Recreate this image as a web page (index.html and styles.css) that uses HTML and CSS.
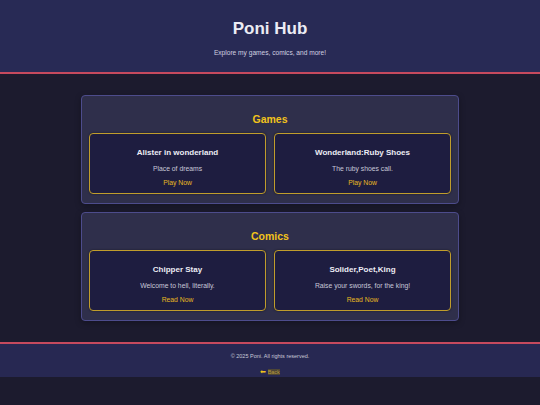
FILE: index.html
```html
<!DOCTYPE html>
<html lang="en">
<head>
  <meta charset="UTF-8">
  <meta name="viewport" content="width=device-width, initial-scale=1.0">
  <title>Poni Hub</title>
  <link rel="stylesheet" href="styles.css">
</head>
<body>
  <header class="site-header">
    <h1>Poni Hub</h1>
    <p>Explore my games, comics, and more!</p>
  </header>

  <main class="hub">
    <section class="shelf">
      <h2>Games</h2>
      <div class="shelf-grid">
        <div class="item">
          <h3>Alister in wonderland</h3>
          <p>Place of dreams</p>
          <a href="#">Play Now</a>
        </div>
        <div class="item">
          <h3>Wonderland:Ruby Shoes</h3>
          <p>The ruby shoes call.</p>
          <a href="#">Play Now</a>
        </div>
      </div>
    </section>

    <section class="shelf">
      <h2>Comics</h2>
      <div class="shelf-grid">
        <div class="item">
          <h3>Chipper Stay</h3>
          <p>Welcome to hell, literally.</p>
          <a href="#">Read Now</a>
        </div>
        <div class="item">
          <h3>Solider,Poet,King</h3>
          <p>Raise your swords, for the king!</p>
          <a href="#">Read Now</a>
        </div>
      </div>
    </section>
  </main>

  <footer class="site-footer">
    <p>&copy; 2025 Poni. All rights reserved.</p>
    <a class="back" href="#"><span class="arrow">⬅</span> <span class="back-text">Back</span></a>
  </footer>
</body>
</html>
```

FILE: styles.css
```css
body {
  margin: 0;
  background: #1c1b2e;
  font-family: "Liberation Sans", Arial, sans-serif;
  color: #e6e6f0;
}

.site-header {
  background: #282a55;
  border-bottom: 2px solid #c64a5e;
  height: 72px;
  text-align: center;
}

.site-header h1 {
  margin: 0;
  padding-top: 19px;
  font-size: 17px;
  line-height: 20px;
  color: #ececf4;
}

.site-header p {
  margin: 9px 0 0;
  font-size: 6.6px;
  line-height: 10px;
  color: #d0d0e0;
}

.hub {
  width: 378px;
  margin: 21px auto;
  display: flex;
  flex-direction: column;
  gap: 8px;
}

.shelf {
  background: #2f2f4b;
  border: 1px solid #4d4c8c;
  border-radius: 4px;
  padding: 16px 7px 9px;
  box-shadow: 0 2px 6px rgba(0, 0, 0, 0.3);
}

.shelf h2 {
  margin: 0 0 7px;
  text-align: center;
  font-size: 10.5px;
  line-height: 14px;
  color: #f2c31b;
}

.shelf-grid {
  display: grid;
  grid-template-columns: 1fr 1fr;
  gap: 8px;
}

.item {
  box-sizing: border-box;
  background: #1e1d40;
  border: 1.5px solid #c09d2c;
  border-radius: 4px;
  height: 61px;
  padding-top: 12.5px;
  text-align: center;
  box-shadow: 0 0 2px rgba(0, 0, 0, 0.5);
}

.item h3 {
  margin: 0;
  font-size: 8px;
  line-height: 11px;
  color: #ececf4;
}

.item p {
  margin: 6px 0 0;
  font-size: 6.8px;
  line-height: 9px;
  color: #c8c8d8;
}

.item a {
  display: block;
  margin-top: 5px;
  font-size: 6.8px;
  line-height: 9px;
  color: #e8b820;
  text-decoration: none;
}

.site-footer {
  background: #272852;
  border-top: 2px solid #c64a5e;
  height: 33px;
  text-align: center;
}

.site-footer p {
  margin: 0;
  padding-top: 8px;
  font-size: 5.5px;
  line-height: 8px;
  color: #c8c8d8;
}

.back {
  display: inline-block;
  margin-top: 3px;
  font-size: 5.5px;
  line-height: 8px;
  text-decoration: none;
}

.arrow {
  font-size: 7px;
  color: #f2c31b;
}

.back-text {
  color: #b89a3c;
  background: #4e4636;
}
```
